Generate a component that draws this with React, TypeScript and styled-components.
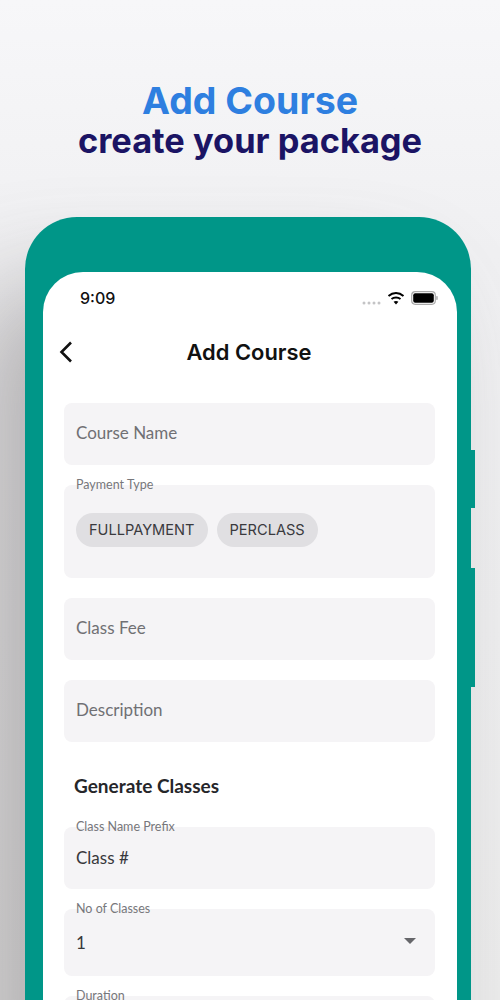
import { createGlobalStyle } from 'styled-components'
import styled from 'styled-components'

const GlobalStyle = createGlobalStyle`
  html, body {
    margin: 0;
    padding: 0;
  }
  body {
    background: #f4f4f6;
    font-family: 'Lato', sans-serif;
  }
`

const Page = styled.div`
  width: 500px;
  height: 1000px;
  overflow: hidden;
  box-sizing: border-box;
  padding-top: 80px;
  background: linear-gradient(180deg, #f7f7f9 0%, #f0f0f2 25%, #ececec 100%);
`

const Heading = styled.header`
  text-align: center;
  font-family: 'Inter', sans-serif;
  height: 137px;
`

const Title = styled.h1`
  margin: 0;
  color: #2e7fe0;
  font-size: 37.5px;
  line-height: 42px;
  font-weight: 700;
`

const Subtitle = styled.h2`
  margin: 0;
  color: #1b1464;
  font-size: 34.4px;
  line-height: 38px;
  font-weight: 700;
`

const Phone = styled.div`
  position: relative;
  box-sizing: border-box;
  width: 446px;
  height: 830px;
  margin-left: 25px;
  padding: 55px 14px 0 18px;
  background: #009688;
  border-radius: 52px 52px 0 0;
  box-shadow: -50px 70px 100px 0 rgba(100, 95, 97, 0.42);
`

const SideButton = styled.span<{ $top: number; $height: number }>`
  position: absolute;
  right: -4px;
  top: ${(p) => p.$top}px;
  width: 4px;
  height: ${(p) => p.$height}px;
  background: #009688;
`

const Screen = styled.div`
  height: 100%;
  background: #fff;
  border-radius: 40px 40px 0 0;
  overflow: hidden;
`

const StatusBar = styled.div`
  display: flex;
  align-items: center;
  justify-content: space-between;
  height: 52px;
  padding: 0 19px 0 37px;
  font-family: 'Inter', sans-serif;
  font-size: 16px;
  font-weight: 500;
  color: #111;
`

const StatusIcons = styled.div`
  display: flex;
  align-items: center;
  gap: 6px;
`

const Dots = styled.svg`
  margin-top: 10px;
`

const NavBar = styled.div`
  position: relative;
  display: flex;
  align-items: center;
  justify-content: center;
  height: 52px;
  padding: 4px 2px 0 0;
  box-sizing: border-box;
  font-family: 'Inter', sans-serif;
  font-size: 21.9px;
  font-weight: 600;
  color: #111;
`

const Back = styled.svg`
  position: absolute;
  left: 15px;
  top: 16px;
`

const Form = styled.div`
  display: flex;
  flex-direction: column;
  padding: 27px 22px 0 21px;
`

const Field = styled.div<{ $height: number; $gap?: number }>`
  position: relative;
  display: flex;
  align-items: center;
  justify-content: space-between;
  box-sizing: border-box;
  height: ${(p) => p.$height}px;
  margin-bottom: ${(p) => p.$gap ?? 20}px;
  padding: 0 12px;
  background: #f5f4f6;
  border-radius: 8px;
`

const FieldLabel = styled.label`
  position: absolute;
  left: 12px;
  top: -8px;
  font-size: 12.5px;
  line-height: 16px;
  color: #77777b;
`

const Placeholder = styled.span`
  font-size: 17px;
  color: #707074;
  margin-bottom: 3px;
`

const Value = styled.span`
  font-size: 17px;
  color: #38383c;
  margin-bottom: 1px;
`

const Chips = styled.div`
  display: flex;
  gap: 9px;
  align-self: flex-start;
  margin-top: 28px;
`

const Chip = styled.span`
  display: flex;
  align-items: center;
  height: 34px;
  padding: 0 13px;
  border-radius: 17px;
  background: #e0dfe2;
  font-family: 'Inter', sans-serif;
  font-size: 14.6px;
  color: #3a3a3e;
`

const SectionTitle = styled.h3`
  margin: 10px 0 0 10px;
  height: 55px;
  font-size: 19px;
  line-height: 28px;
  font-weight: 700;
  color: #26262a;
`

const Caret = styled.span`
  width: 0;
  height: 0;
  border-left: 6px solid transparent;
  border-right: 6px solid transparent;
  border-top: 6px solid #66666a;
  margin: 0 7px 3px 0;
`

export default function App() {
  return (
    <Page>
      <GlobalStyle />
      <Heading>
        <Title>Add Course</Title>
        <Subtitle>create your package</Subtitle>
      </Heading>
      <Phone>
        <SideButton $top={233} $height={58} />
        <SideButton $top={351} $height={119} />
        <Screen>
          <StatusBar>
            <span>9:09</span>
            <StatusIcons>
              <Dots width="19" height="4" viewBox="0 0 19 4">
                {[2, 7, 12, 17].map((x) => (
                  <circle key={x} cx={x} cy="2" r="1.5" fill="#c4c4c6" />
                ))}
              </Dots>
              <svg width="18" height="14" viewBox="0 0 18 14" fill="none" stroke="#000" strokeWidth="2">
                <path d="M1.5 5C6 1 12 1 16.5 5" />
                <path d="M4.5 8C7 6 11 6 13.5 8" />
                <path d="M9 13.5L6.6 10.8C8 9.8 10 9.8 11.4 10.8Z" fill="#000" stroke="none" />
              </svg>
              <svg width="27" height="14" viewBox="0 0 27 14">
                <rect x="0.7" y="0.7" width="23.6" height="12.6" rx="3.5" fill="none" stroke="#aaa" strokeWidth="1.2" />
                <rect x="2.2" y="2.2" width="20.6" height="9.6" rx="2" fill="#000" />
                <rect x="25.2" y="5" width="1.5" height="4" rx="0.7" fill="#aaa" />
              </svg>
            </StatusIcons>
          </StatusBar>
          <NavBar>
            <Back width="16" height="24" viewBox="0 0 16 24" fill="none" stroke="#111" strokeWidth="2.6">
              <path d="M13 2.5L3.5 12L13 21.5" />
            </Back>
            Add Course
          </NavBar>
          <Form>
            <Field $height={62}>
              <Placeholder>Course Name</Placeholder>
            </Field>
            <Field $height={93}>
              <FieldLabel>Payment Type</FieldLabel>
              <Chips>
                <Chip>FULLPAYMENT</Chip>
                <Chip>PERCLASS</Chip>
              </Chips>
            </Field>
            <Field $height={62}>
              <Placeholder>Class Fee</Placeholder>
            </Field>
            <Field $height={62}>
              <Placeholder>Description</Placeholder>
            </Field>
            <SectionTitle>Generate Classes</SectionTitle>
            <Field $height={62}>
              <FieldLabel>Class Name Prefix</FieldLabel>
              <Value>Class #</Value>
            </Field>
            <Field $height={67}>
              <FieldLabel>No of Classes</FieldLabel>
              <Value>1</Value>
              <Caret />
            </Field>
            <Field $height={62}>
              <FieldLabel>Duration</FieldLabel>
            </Field>
          </Form>
        </Screen>
      </Phone>
    </Page>
  )
}
